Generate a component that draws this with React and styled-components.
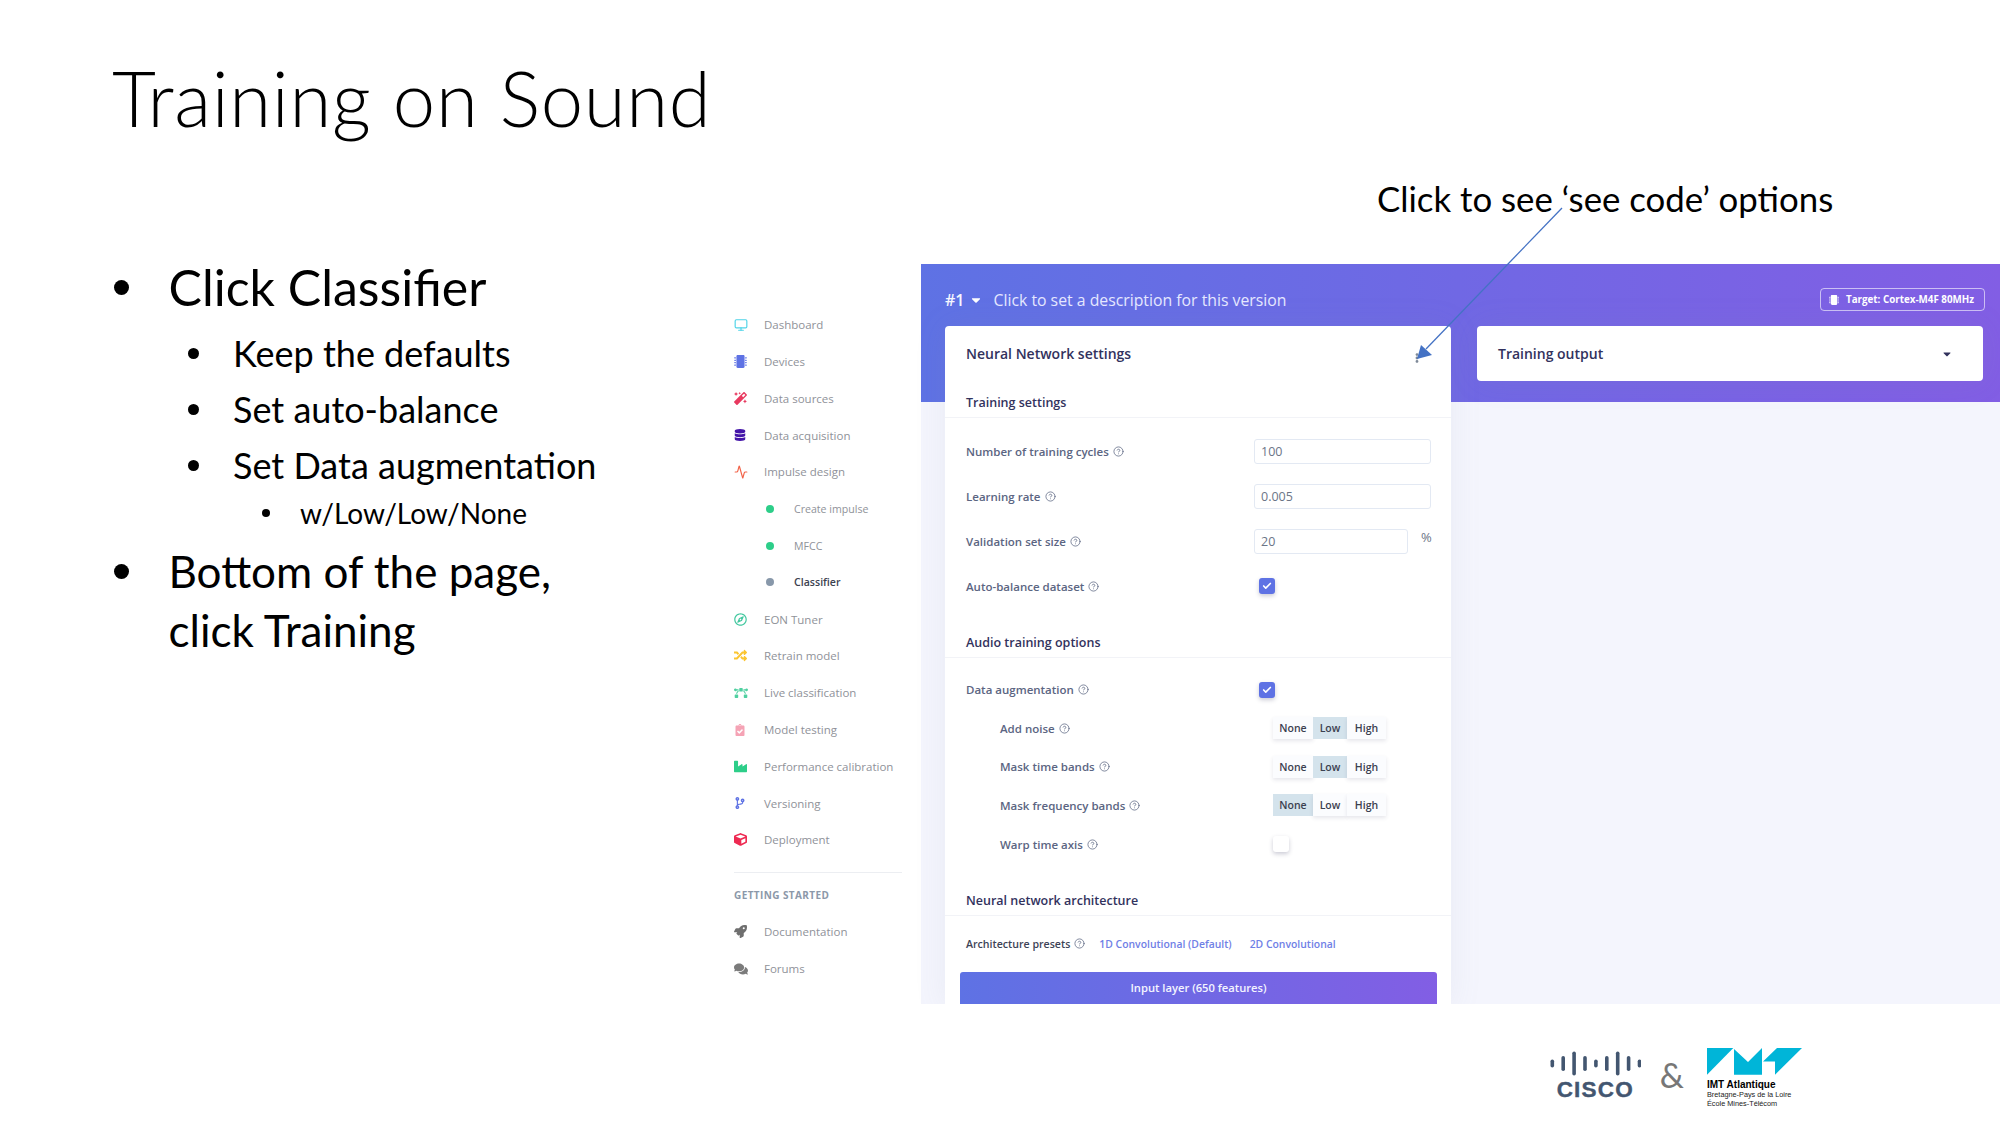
import React from 'react';
import styled, { createGlobalStyle } from 'styled-components';
import { Monitor, Activity, CircleHelp, Check } from 'lucide-react';
import {
  FaMicrochip,
  FaMagic,
  FaDatabase,
  FaRegCompass,
  FaRandom,
  FaBezierCurve,
  FaClipboardCheck,
  FaIndustry,
  FaCodeBranch,
  FaCube,
  FaRocket,
  FaComments,
  FaCaretDown,
  FaEllipsisV
} from 'react-icons/fa';

const GlobalStyle = createGlobalStyle`
  html, body {
    margin: 0;
    padding: 0;
    background: #fff;
  }
`;

const SLIDE_FONT = `Lato, 'Open Sans', sans-serif`;
const APP_FONT = `'Open Sans', 'Noto Sans', sans-serif`;

const Slide = styled.div`
  width: 2000px;
  height: 1125px;
  overflow: hidden;
  display: flex;
  flex-direction: column;
  position: relative;
  background: #fff;
  font-family: ${SLIDE_FONT};
  color: #000;
`;

const Upper = styled.div`
  display: flex;
  height: 1004px;
`;

const LeftColumn = styled.div`
  width: 720px;
  flex: none;
  box-sizing: border-box;
  padding: 48px 0 0 112px;
`;

const Title = styled.h1`
  margin: 0 0 110px;
  font-size: 76px;
  line-height: 100px;
  font-weight: 300;
  letter-spacing: 0.7px;
  white-space: nowrap;
`;

const Bullets = styled.ul`
  list-style: none;
  margin: 0;
  padding: 0;
`;

const levels = {
  1: { size: 50, line: 59, indent: 0, bullet: 56.5, dot: 15, dotLeft: 2 },
  2: { size: 36, line: 56, indent: 76, bullet: 45, dot: 11, dotLeft: 0 },
  3: { size: 28, line: 40, indent: 150, bullet: 38, dot: 8, dotLeft: 0 }
};

const Item = styled.li`
  display: flex;
  margin-left: ${p => levels[p.$level].indent}px;
  margin-top: ${p => p.$top || 0}px;
  font-size: ${p => p.$size || levels[p.$level].size}px;
  line-height: ${p => levels[p.$level].line}px;
  font-weight: 400;
`;

const Bullet = styled.span`
  flex: none;
  width: ${p => levels[p.$level].bullet}px;
  display: flex;
  align-items: center;
  height: ${p => levels[p.$level].line}px;
  &::before {
    content: '';
    width: ${p => levels[p.$level].dot}px;
    height: ${p => levels[p.$level].dot}px;
    margin-left: ${p => levels[p.$level].dotLeft}px;
    border-radius: 50%;
    background: #000;
  }
`;

const RightColumn = styled.div`
  flex: 1;
  box-sizing: border-box;
  padding-top: 264px;
  min-width: 0;
`;

const Callout = styled.div`
  position: absolute;
  left: 1377px;
  top: 174px;
  font-size: 34.8px;
  line-height: 50px;
  white-space: nowrap;
`;

const ArrowLayer = styled.svg`
  position: absolute;
  left: 0;
  top: 0;
  pointer-events: none;
`;

const Shot = styled.div`
  height: 740px;
  display: flex;
  font-family: ${APP_FONT};
  overflow: hidden;
`;

/* sidebar */
const Sidebar = styled.nav`
  width: 201px;
  flex: none;
  box-sizing: border-box;
  padding: 42.4px 19px 0 14px;
  background: #fff;
`;

const NavItem = styled.div`
  height: 36.8px;
  display: flex;
  align-items: center;
  font-size: ${p => (p.$sub ? 10.6 : 11.5)}px;
  color: ${p => (p.$active ? '#3c4250' : '#8f9299')};
  font-weight: ${p => (p.$active ? 600 : 400)};
  white-space: nowrap;
`;

const NavIcon = styled.span`
  width: 30px;
  flex: none;
  display: flex;
  align-items: center;
  color: ${p => p.$color};
  svg {
    display: block;
  }
`;

const Dot = styled.span`
  flex: none;
  width: 8px;
  height: 8px;
  border-radius: 50%;
  margin: 0 20px 0 32px;
  background: ${p => p.$color};
`;

const NavDivider = styled.div`
  height: 1px;
  margin: 14px 0 15px;
  background: #eceef2;
`;

const NavHeading = styled.div`
  font-size: 10px;
  line-height: 14px;
  font-weight: 700;
  letter-spacing: 0.4px;
  color: #8c98a9;
  margin-bottom: 11px;
`;

/* main area */
const Main = styled.main`
  flex: 1;
  min-width: 0;
  background: #f4f5fd;
`;

const HeaderBand = styled.div`
  height: 138px;
  box-sizing: border-box;
  padding: 9px 15px 0 24px;
  background: linear-gradient(87deg, #5e72e4 0%, #825ee4 100%);
`;

const HeaderBar = styled.div`
  height: 53px;
  display: flex;
  align-items: center;
  color: #fff;
`;

const VersionTag = styled.span`
  font-size: 16px;
  font-weight: 600;
  margin-right: 5px;
  color: #f6f7ff;
`;

const VersionCaret = styled.span`
  display: flex;
  margin-right: 10px;
`;

const Description = styled.span`
  font-size: 15.8px;
  font-weight: 400;
  color: #e6e8ff;
  flex: 1;
  white-space: nowrap;
`;

const TargetBadge = styled.span`
  display: flex;
  align-items: center;
  gap: 7px;
  box-sizing: border-box;
  height: 23px;
  width: 165px;
  padding: 0 0 0 8px;
  border: 1px solid rgba(255, 255, 255, 0.6);
  border-radius: 4px;
  font-size: 9.8px;
  font-weight: 700;
  white-space: nowrap;
`;

const Cards = styled.div`
  display: flex;
  gap: 26px;
  align-items: flex-start;
  margin-top: -76px;
  padding: 0 17px 0 24px;
`;

const Card = styled.section`
  width: 506px;
  flex: none;
  background: #fff;
  border-radius: 4px;
  box-shadow: 0 0 2rem 0 rgba(136, 152, 170, 0.1);
`;

const CardHead = styled.header`
  height: 55px;
  box-sizing: border-box;
  padding: 0 ${p => p.$right}px 0 21px;
  display: flex;
  align-items: center;
  justify-content: space-between;
  font-size: 14px;
  font-weight: 600;
  color: #32325d;
`;

const MoreButton = styled.span`
  display: flex;
  color: #7f8a99;
  margin-top: 8px;
`;

const SectionTitle = styled.h3`
  margin: ${p => p.$top}px 0 0;
  padding: 13px 21px 5px;
  font-size: 12.5px;
  line-height: 18px;
  font-weight: 600;
  color: #32325d;
  border-bottom: 1px solid #f2f3f7;
`;

const FormGroup = styled.div`
  padding-top: ${p => p.$top}px;
`;

const FormRow = styled.div`
  height: ${p => p.$height}px;
  display: grid;
  grid-template-columns: ${p => (p.$sub ? '273px' : '288px')} 1fr;
  padding-left: ${p => (p.$sub ? 55 : 21)}px;
  align-items: center;
`;

const Label = styled.label`
  display: flex;
  align-items: center;
  gap: 4px;
  font-size: ${p => p.$size || 11.5}px;
  font-weight: 600;
  color: ${p => p.$color || '#5b6582'};
  white-space: nowrap;
  svg {
    color: #5f6985;
  }
`;

const InputLine = styled.div`
  display: flex;
  align-items: flex-start;
`;

const TextInput = styled.div`
  box-sizing: border-box;
  width: ${p => p.$width}px;
  height: 25px;
  padding: 0 6px;
  display: flex;
  align-items: center;
  border: 1px solid #e3e9f3;
  border-radius: 3px;
  background: #fff;
  font-size: 12.5px;
  color: #6c7587;
`;

const Unit = styled.span`
  margin: -1px 0 0 13px;
  font-size: 13px;
  color: #6c7587;
`;

const CheckBox = styled.span`
  box-sizing: border-box;
  width: 16px;
  height: 16px;
  margin-left: ${p => p.$left || 0}px;
  border-radius: 3px;
  display: flex;
  align-items: center;
  justify-content: center;
  color: #fff;
  background: ${p => (p.$checked ? '#5e72e4' : '#fff')};
  box-shadow: 0 2px 4px rgba(50, 50, 93, 0.25);
`;

const Segments = styled.div`
  display: flex;
  width: 113px;
`;

const Segment = styled.span`
  width: ${p => p.$width}px;
  height: 22px;
  display: flex;
  align-items: center;
  justify-content: center;
  font-size: 10.5px;
  font-weight: 600;
  color: #3b4150;
  background: ${p => (p.$active ? '#d4e3ec' : '#fbfcfe')};
  box-shadow: ${p => (p.$active ? 'none' : '0 2px 4px rgba(50, 50, 93, 0.12)')};
`;

const PresetRow = styled.div`
  height: 56px;
  padding-left: 21px;
  display: flex;
  align-items: center;
`;

const PresetLink = styled.a`
  font-size: 10.4px;
  font-weight: 600;
  color: #6f80e6;
  margin-left: ${p => p.$left}px;
  white-space: nowrap;
`;

const InputLayer = styled.div`
  height: 36px;
  margin: 0 14px 0 15px;
  border-radius: 3px;
  display: flex;
  align-items: center;
  justify-content: center;
  padding-bottom: 5px;
  box-sizing: border-box;
  font-size: 11.2px;
  font-weight: 600;
  color: #f4f5ff;
  background: linear-gradient(87deg, #5e72e4 0%, #825ee4 100%);
`;

/* footer logos */
const Footer = styled.footer`
  flex: 1;
  display: flex;
  justify-content: flex-end;
  align-items: flex-start;
  padding: 47px 196px 0 0;
  font-family: 'Liberation Sans', Arial, sans-serif;
`;

const CiscoLogo = styled.div`
  width: 91px;
  display: flex;
  flex-direction: column;
  align-items: center;
  margin-right: 19px;
  color: #435670;
`;

const CiscoWord = styled.span`
  font-size: 22.5px;
  line-height: 19px;
  margin-top: 4px;
  font-weight: 700;
  letter-spacing: 1.2px;
  -webkit-text-stroke: 0.4px #435670;
`;

const Ampersand = styled.span`
  font-family: ${SLIDE_FONT};
  font-size: 34px;
  line-height: 50px;
  font-weight: 400;
  color: #777;
  margin: -1px 23px 0 0;
`;

const ImtLogo = styled.div`
  width: 97px;
  margin-top: -3px;
`;

const ImtName = styled.div`
  font-size: 10px;
  line-height: 11px;
  font-weight: 700;
  white-space: nowrap;
  margin-top: 4px;
`;

const ImtLine = styled.div`
  font-size: 7.3px;
  line-height: 9.2px;
  color: #222;
  white-space: nowrap;
`;

const Help = () => <CircleHelp size={11} strokeWidth={1.7} />;

const navItems = [
  { label: 'Dashboard', color: '#4fd3e8', icon: <Monitor size={14} strokeWidth={2} /> },
  { label: 'Devices', color: '#5e72e4', icon: <FaMicrochip size={13} /> },
  { label: 'Data sources', color: '#e8395f', icon: <FaMagic size={13} /> },
  { label: 'Data acquisition', color: '#4314a8', icon: <FaDatabase size={12} /> },
  { label: 'Impulse design', color: '#f2644a', icon: <Activity size={14} strokeWidth={2} /> },
  { label: 'Create impulse', dot: '#2dce89' },
  { label: 'MFCC', dot: '#2dce89' },
  { label: 'Classifier', dot: '#8898aa', active: true },
  { label: 'EON Tuner', color: '#44c8a0', icon: <FaRegCompass size={13} /> },
  { label: 'Retrain model', color: '#fbc531', icon: <FaRandom size={13} /> },
  { label: 'Live classification', color: '#4fd0a0', icon: <FaBezierCurve size={14} /> },
  { label: 'Model testing', color: '#f5a3b5', icon: <FaClipboardCheck size={12} /> },
  { label: 'Performance calibration', color: '#2dce89', icon: <FaIndustry size={13} /> },
  { label: 'Versioning', color: '#5e72e4', icon: <FaCodeBranch size={12} /> },
  { label: 'Deployment', color: '#ee2a52', icon: <FaCube size={13} /> }
];

const segmentWidths = { None: 40, Low: 34, High: 39 };

const LevelPicker = ({ value }) => (
  <Segments>
    {Object.keys(segmentWidths).map(name => (
      <Segment key={name} $width={segmentWidths[name]} $active={name === value}>
        {name}
      </Segment>
    ))}
  </Segments>
);

const Tick = () => <Check size={10} strokeWidth={4} />;

const CiscoBars = () => {
  const heights = [8, 15, 24, 15, 8, 15, 24, 15, 8];
  return (
    <svg width="91" height="25" viewBox="0 0 91 25">
      {heights.map((h, i) => (
        <rect
          key={i}
          x={i * 10.9 + 0.5}
          y={12.5 - h / 2}
          width="3.6"
          height={h}
          rx="1.8"
          fill="#435670"
        />
      ))}
    </svg>
  );
};

const ImtMark = () => (
  <svg width="95" height="27" viewBox="0 0 95 27" style={{ display: 'block' }}>
    <g fill="#00b5d8">
      <polygon points="0,0 26.3,0 0,26.8" />
      <polygon points="27,1 41,14 55,0 55,26.8 27,26.8" />
      <polygon points="95,0 68,26.8 68,13.5 56,13.5 70,0" />
    </g>
  </svg>
);

export default function App() {
  return (
    <Slide>
      <GlobalStyle />
      <Upper>
        <LeftColumn>
          <Title>Training on Sound</Title>
          <Bullets>
            <Item $level={1}>
              <Bullet $level={1} />
              Click Classifier
            </Item>
            <Item $level={2} $top={8}>
              <Bullet $level={2} />
              Keep the defaults
            </Item>
            <Item $level={2}>
              <Bullet $level={2} />
              Set auto-balance
            </Item>
            <Item $level={2}>
              <Bullet $level={2} />
              Set Data augmentation
            </Item>
            <Item $level={3}>
              <Bullet $level={3} />
              w/Low/Low/None
            </Item>
            <Item $level={1} $top={9} $size={44}>
              <Bullet $level={1} />
              <span>
                Bottom of the page,
                <br />
                click Training
              </span>
            </Item>
          </Bullets>
        </LeftColumn>

        <RightColumn>
          <Shot>
            <Sidebar>
              {navItems.map(item => (
                <NavItem key={item.label} $active={item.active} $sub={!!item.dot}>
                  {item.dot ? (
                    <Dot $color={item.dot} />
                  ) : (
                    <NavIcon $color={item.color}>{item.icon}</NavIcon>
                  )}
                  {item.label}
                </NavItem>
              ))}
              <NavDivider />
              <NavHeading>GETTING STARTED</NavHeading>
              <NavItem>
                <NavIcon $color="#6f6f6f">
                  <FaRocket size={13} />
                </NavIcon>
                Documentation
              </NavItem>
              <NavItem>
                <NavIcon $color="#7b7b7b">
                  <FaComments size={14} />
                </NavIcon>
                Forums
              </NavItem>
            </Sidebar>

            <Main>
              <HeaderBand>
                <HeaderBar>
                  <VersionTag>#1</VersionTag>
                  <VersionCaret>
                    <FaCaretDown size={14} />
                  </VersionCaret>
                  <Description>Click to set a description for this version</Description>
                  <TargetBadge>
                    <FaMicrochip size={10} />
                    Target: Cortex-M4F 80MHz
                  </TargetBadge>
                </HeaderBar>
              </HeaderBand>

              <Cards>
                <Card>
                  <CardHead $right={29}>
                    Neural Network settings
                    <MoreButton>
                      <FaEllipsisV size={10} />
                    </MoreButton>
                  </CardHead>

                  <SectionTitle $top={0}>Training settings</SectionTitle>
                  <FormGroup $top={10.5}>
                    <FormRow $height={45.1}>
                      <Label>Number of training cycles <Help /></Label>
                      <TextInput $width={177}>100</TextInput>
                    </FormRow>
                    <FormRow $height={45.1}>
                      <Label>Learning rate <Help /></Label>
                      <TextInput $width={177}>0.005</TextInput>
                    </FormRow>
                    <FormRow $height={45.1}>
                      <Label>Validation set size <Help /></Label>
                      <InputLine>
                        <TextInput $width={154}>20</TextInput>
                        <Unit>%</Unit>
                      </InputLine>
                    </FormRow>
                    <FormRow $height={45.1}>
                      <Label>Auto-balance dataset <Help /></Label>
                      <CheckBox $checked $left={5}>
                        <Tick />
                      </CheckBox>
                    </FormRow>
                  </FormGroup>

                  <SectionTitle $top={12}>Audio training options</SectionTitle>
                  <FormGroup $top={12.5}>
                    <FormRow $height={38.6}>
                      <Label>Data augmentation <Help /></Label>
                      <CheckBox $checked $left={5}>
                        <Tick />
                      </CheckBox>
                    </FormRow>
                    <FormRow $sub $height={38.6}>
                      <Label>Add noise <Help /></Label>
                      <LevelPicker value="Low" />
                    </FormRow>
                    <FormRow $sub $height={38.6}>
                      <Label>Mask time bands <Help /></Label>
                      <LevelPicker value="Low" />
                    </FormRow>
                    <FormRow $sub $height={38.6}>
                      <Label>Mask frequency bands <Help /></Label>
                      <LevelPicker value="None" />
                    </FormRow>
                    <FormRow $sub $height={38.6}>
                      <Label>Warp time axis <Help /></Label>
                      <CheckBox />
                    </FormRow>
                  </FormGroup>

                  <SectionTitle $top={15.5}>Neural network architecture</SectionTitle>
                  <PresetRow>
                    <Label $color="#3d4356" $size={10.6}>Architecture presets <Help /></Label>
                    <PresetLink $left={14}>1D Convolutional (Default)</PresetLink>
                    <PresetLink $left={18}>2D Convolutional</PresetLink>
                  </PresetRow>
                  <InputLayer>Input layer (650 features)</InputLayer>
                </Card>

                <Card>
                  <CardHead $right={30}>
                    Training output
                    <FaCaretDown size={12} color="#32325d" />
                  </CardHead>
                </Card>
              </Cards>
            </Main>
          </Shot>
        </RightColumn>
      </Upper>

      <Footer>
        <CiscoLogo>
          <CiscoBars />
          <CiscoWord>CISCO</CiscoWord>
        </CiscoLogo>
        <Ampersand>&amp;</Ampersand>
        <ImtLogo>
          <ImtMark />
          <ImtName>IMT Atlantique</ImtName>
          <ImtLine>Bretagne-Pays de la Loire</ImtLine>
          <ImtLine>École Mines-Télécom</ImtLine>
        </ImtLogo>
      </Footer>

      <Callout>Click to see ‘see code’ options</Callout>
      <ArrowLayer width="2000" height="1125" viewBox="0 0 2000 1125">
        <line x1="1562" y1="208" x2="1426" y2="349" stroke="#4472c4" strokeWidth="1.3" />
        <polygon points="1417,359 1421,345 1432,355" fill="#4472c4" />
      </ArrowLayer>
    </Slide>
  );
}
